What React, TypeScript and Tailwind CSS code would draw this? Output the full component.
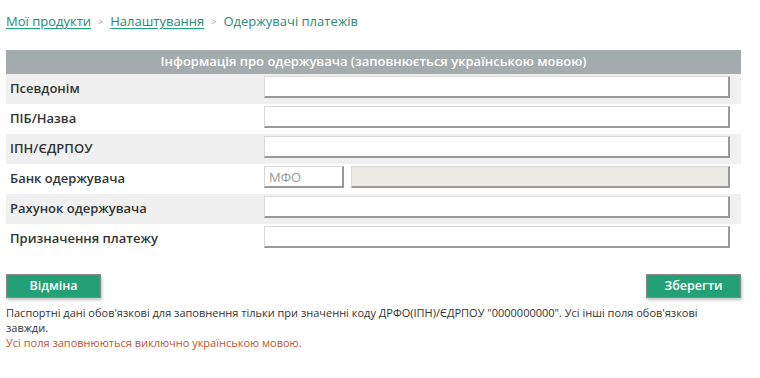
export default function App() {
  const rows = [
    { label: "Псевдонім" },
    { label: "ПІБ/Назва" },
    { label: "ІПН/ЄДРПОУ" },
    { label: "Банк одержувача", bank: true },
    { label: "Рахунок одержувача" },
    { label: "Призначення платежу" },
  ];

  const inputCls =
    "h-[22px] border-t border-l border-t-[#d9d9d9] border-l-[#d9d9d9] border-r-2 border-b-2 border-r-[#999] border-b-[#999] px-1 text-[13px] outline-none";

  return (
    <div className="min-h-screen bg-white font-['Open_Sans',sans-serif] text-[#333]">
      <div className="w-[735px] ml-[6px] pt-[13px]">
        <div className="flex items-center text-[13px] h-[18px]">
          <a className="text-[#238a78] underline decoration-[#17a67c] underline-offset-2">Мої продукти</a>
          <span className="mx-[7px] text-[9px] text-[#999]">&gt;</span>
          <a className="text-[#238a78] underline decoration-[#17a67c] underline-offset-2">Налаштування</a>
          <span className="mx-[7px] text-[9px] text-[#999]">&gt;</span>
          <span className="text-[#2e8a7a]">Одержувачі платежів</span>
        </div>

        <div className="mt-[19px]">
          <div className="h-[24px] bg-[#a3abac] flex items-center justify-center text-white text-[13px] font-semibold">
            Інформація про одержувача (заповнюється українською мовою)
          </div>
          {rows.map((r, i) => (
            <div
              key={r.label}
              className={`h-[30px] flex items-start ${i % 2 === 0 ? "bg-[#f0f0f0]" : "bg-white"}`}
            >
              <div className="w-[258px] pl-[4px] h-[30px] flex items-center text-[13px] font-semibold text-[#333]">
                {r.label}
              </div>
              {r.bank ? (
                <div className="flex mt-[2px]">
                  <input className={`${inputCls} w-[80px] bg-white placeholder-[#999]`} placeholder="МФО" />
                  <input className={`${inputCls} w-[379px] ml-[7px] bg-[#eae9e3]`} disabled />
                </div>
              ) : (
                <input className={`${inputCls} w-[466px] mt-[2px] bg-white`} />
              )}
            </div>
          ))}
        </div>

        <div className="flex justify-between mt-[20px]">
          <button className="w-[95px] h-[24px] bg-[#23a075] border border-[#8a8a8a] text-white text-[12.5px] font-semibold shadow-[1px_2px_3px_rgba(0,0,0,0.25)]">
            Відміна
          </button>
          <button className="w-[95px] h-[24px] bg-[#23a075] border border-[#8a8a8a] text-white text-[12.5px] font-semibold shadow-[1px_2px_3px_rgba(0,0,0,0.25)]">
            Зберегти
          </button>
        </div>

        <div className="mt-[7px] text-[11px] leading-[15px] text-[#333] pr-[20px]">
          Паспортні дані обов'язкові для заповнення тільки при значенні коду ДРФО(ІПН)/ЄДРПОУ "0000000000". Усі інші поля обов'язкові завжди.
        </div>
        <div className="text-[11px] leading-[15px] text-[#c2532f]">
          Усі поля заповнюються виключно українською мовою.
        </div>
      </div>
    </div>
  );
}
